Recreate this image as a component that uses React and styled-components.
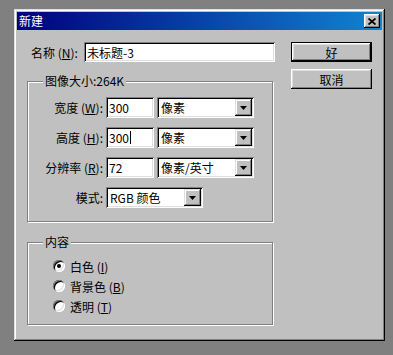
import React from 'react';
import styled, { createGlobalStyle, css } from 'styled-components';

// 页面底色与字体
const GlobalStyle = createGlobalStyle`
  html, body {
    margin: 0;
    padding: 0;
    background: #808080;
  }
  body {
    font-family: "Noto Sans CJK SC", "Liberation Sans", sans-serif;
    font-size: 12px;
    color: #000;
  }
`;

// 凹陷边框
const sunken = css`
  background: #fff;
  box-shadow: inset 1px 1px #808080, inset -1px -1px #fff,
    inset 2px 2px #000, inset -2px -2px #dfdfdf;
`;

// 凸起边框
const raised = css`
  background: #c0c0c0;
  box-shadow: inset -1px -1px #000, inset 1px 1px #fff,
    inset -2px -2px #808080, inset 2px 2px #dfdfdf;
`;

const Desktop = styled.div`
  height: 355px;
  box-sizing: border-box;
  padding: 9px 0 0 14px;
`;

const Window = styled.div`
  width: 371px;
  height: 332px;
  box-sizing: border-box;
  padding: 3px;
  background: #c0c0c0;
  box-shadow: inset -1px -1px #000, inset 1px 1px #dfdfdf,
    inset -2px -2px #808080, inset 2px 2px #fff;
  display: flex;
  flex-direction: column;
`;

const TitleBar = styled.div`
  height: 18px;
  display: flex;
  align-items: center;
  justify-content: space-between;
  padding: 0 2px;
  background: linear-gradient(to right, #000080, #1084d0);
  color: #fff;
  line-height: 18px;
`;

const CloseButton = styled.div`
  ${raised};
  width: 16px;
  height: 14px;
  display: flex;
  align-items: center;
  justify-content: center;
`;

const Content = styled.div`
  display: flex;
  padding: 12px 0 0 10px;
`;

const LeftColumn = styled.div`
  width: 248px;
  display: flex;
  flex-direction: column;
`;

const RightColumn = styled.div`
  margin-left: 16px;
  display: flex;
  flex-direction: column;
  gap: 7px;
`;

const NameRow = styled.div`
  display: flex;
  align-items: center;
  height: 20px;
`;

const NameLabel = styled.div`
  width: 53px;
  padding-left: 4px;
  white-space: nowrap;
`;

const Field = styled.div`
  ${sunken};
  width: ${(p) => p.width}px;
  height: ${(p) => p.height || 21}px;
  box-sizing: border-box;
  padding: 0 3px;
  display: flex;
  align-items: center;
  white-space: nowrap;
`;

const Caret = styled.span`
  display: inline-block;
  width: 1px;
  height: 13px;
  margin-left: 1px;
  background: #000;
`;

const Group = styled.div`
  position: relative;
  width: 246px;
  height: ${(p) => p.height}px;
  margin-top: ${(p) => p.top}px;
  box-sizing: border-box;
  border: 1px solid #808080;
  box-shadow: inset 1px 1px #fff, 1px 1px #fff;
  padding: ${(p) => p.pad};
  display: flex;
  flex-direction: column;
  gap: ${(p) => p.gap}px;
`;

const Legend = styled.div`
  position: absolute;
  top: -9px;
  left: 15px;
  padding: 0 2px;
  line-height: 16px;
  background: #c0c0c0;
  white-space: nowrap;
`;

const FormRow = styled.div`
  display: flex;
  align-items: center;
  height: 21px;
  gap: 3px;
`;

const RowLabel = styled.div`
  width: 75px;
  text-align: right;
  white-space: nowrap;
`;

const SelectBox = styled.div`
  ${sunken};
  width: 97px;
  height: 21px;
  box-sizing: border-box;
  display: flex;
  align-items: center;
  padding: 2px;
`;

const SelectText = styled.div`
  flex: 1;
  padding-left: 2px;
  white-space: nowrap;
`;

const DropButton = styled.div`
  width: 17px;
  height: 17px;
  background: #c0c0c0;
  box-shadow: inset -1px -1px #000, inset 1px 1px #dfdfdf,
    inset -2px -2px #808080, inset 2px 2px #fff;
  display: flex;
  align-items: center;
  justify-content: center;
`;

const RadioRow = styled.div`
  display: flex;
  align-items: center;
  height: 20px;
  padding-left: 25px;
  gap: 5px;
`;

const RadioCircle = styled.div`
  width: 12px;
  height: 12px;
  border-radius: 50%;
  background: #fff;
  box-shadow: inset 1px 1px #808080, inset -1px -1px #fff,
    inset 2px 2px #000, inset -2px -2px #dfdfdf;
  display: flex;
  align-items: center;
  justify-content: center;
  &::after {
    content: '';
    width: 4px;
    height: 4px;
    border-radius: 50%;
    background: ${(p) => (p.checked ? '#000' : 'transparent')};
  }
`;

const Button = styled.div`
  ${raised};
  width: 81px;
  height: 20px;
  box-sizing: border-box;
  display: flex;
  align-items: center;
  justify-content: center;
  ${(p) =>
    p.primary &&
    css`
      box-shadow: inset 0 0 0 1px #000, inset -2px -2px #000,
        inset 2px 2px #fff, inset -3px -3px #808080, inset 3px 3px #dfdfdf;
    `}
`;

const Arrow = () => (
  <svg width="7" height="4" viewBox="0 0 7 4">
    <polygon points="0,0 7,0 3.5,4" fill="#000" />
  </svg>
);

const CloseIcon = () => (
  <svg width="8" height="7" viewBox="0 0 8 7">
    <path d="M0.5 0.5 L7.5 6.5 M7.5 0.5 L0.5 6.5" stroke="#000" strokeWidth="1.8" />
  </svg>
);

const Select = ({ value }) => (
  <SelectBox>
    <SelectText>{value}</SelectText>
    <DropButton>
      <Arrow />
    </DropButton>
  </SelectBox>
);

const Radio = ({ checked, children }) => (
  <RadioRow>
    <RadioCircle checked={checked} />
    <span>{children}</span>
  </RadioRow>
);

const App = () => {
  return (
    <>
      <GlobalStyle />
      <Desktop>
        <Window>
          <TitleBar>
            <span>新建</span>
            <CloseButton>
              <CloseIcon />
            </CloseButton>
          </TitleBar>
          <Content>
            <LeftColumn>
              <NameRow>
                <NameLabel>
                  名称 (<u>N</u>):
                </NameLabel>
                <Field width={191} height={20}>
                  未标题-3
                </Field>
              </NameRow>

              <Group top={19} height={141} pad="15px 0 0 0" gap={9}>
                <Legend>图像大小:264K</Legend>
                <FormRow>
                  <RowLabel>
                    宽度 (<u>W</u>):
                  </RowLabel>
                  <Field width={48}>300</Field>
                  <Select value="像素" />
                </FormRow>
                <FormRow>
                  <RowLabel>
                    高度 (<u>H</u>):
                  </RowLabel>
                  <Field width={48}>
                    300
                    <Caret />
                  </Field>
                  <Select value="像素" />
                </FormRow>
                <FormRow>
                  <RowLabel>
                    分辨率 (<u>R</u>):
                  </RowLabel>
                  <Field width={48}>72</Field>
                  <Select value="像素/英寸" />
                </FormRow>
                <FormRow>
                  <RowLabel>模式:</RowLabel>
                  <Select value="RGB 颜色" />
                </FormRow>
              </Group>

              <Group top={20} height={83} pad="13px 0 0 0" gap={0}>
                <Legend>内容</Legend>
                <Radio checked>
                  白色 (<u>I</u>)
                </Radio>
                <Radio>
                  背景色 (<u>B</u>)
                </Radio>
                <Radio>
                  透明 (<u>T</u>)
                </Radio>
              </Group>
            </LeftColumn>

            <RightColumn>
              <Button primary>好</Button>
              <Button>取消</Button>
            </RightColumn>
          </Content>
        </Window>
      </Desktop>
    </>
  );
};

export default App;
